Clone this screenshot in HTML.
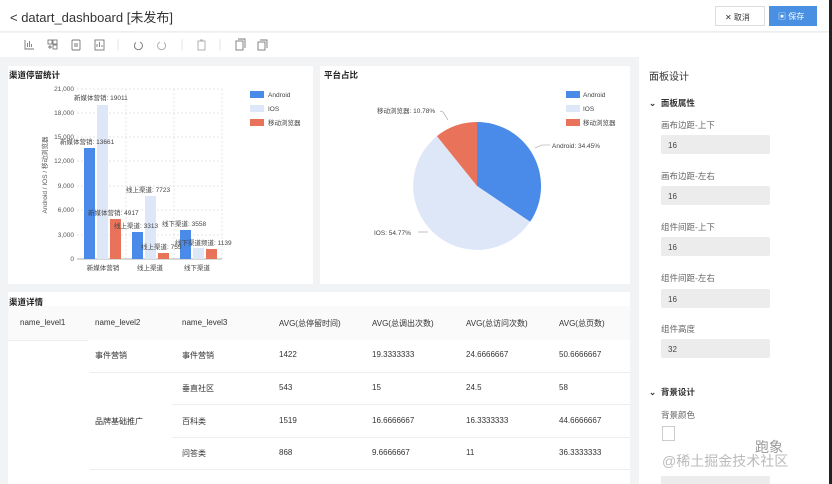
<!DOCTYPE html>
<html><head><meta charset="utf-8"><style>
*{margin:0;padding:0;box-sizing:border-box}
body{width:832px;height:484px;overflow:hidden;background:#f2f3f5;font-family:"Liberation Sans","Noto Sans CJK SC",sans-serif;color:#333;position:relative}
.a{position:absolute}
.card{position:absolute;background:#fff}
.t{font-size:8px;color:#333;position:absolute;white-space:nowrap}
.ttl{font-size:8.5px;font-weight:bold;color:#222}
.lab{font-size:8.5px;color:#666}
.inp{position:absolute;left:661px;width:109px;height:19px;background:#ececec;border-radius:2px;font-size:8px;color:#444;padding:6px 0 0 7px}
</style></head><body>
<div class="a" style="left:0;top:0;width:832px;height:32px;background:#fff;border-bottom:1px solid #eee"></div>
<div class="a" style="left:10px;top:7px;font-size:13px;color:#333">&lt; datart_dashboard [未发布]</div>
<div class="a" style="left:715px;top:6px;width:50px;height:20px;border:1px solid #ddd;background:#fff;font-size:8px;padding:5px 0 0 9px">✕ 取消</div>
<div class="a" style="left:769px;top:6px;width:48px;height:20px;background:#4a90e2;color:#fff;font-size:8px;padding:5px 0 0 9px">▣ 保存</div>
<div class="a" style="left:0;top:33px;width:832px;height:24px;background:#fff"></div>
<svg class="a" style="left:0;top:33px" width="280" height="24" fill="none" stroke="#777" stroke-width="0.9">
<path d="M25,7 V16 H34 M27.5,14 V10 M29.5,14 V8 M31.5,14 V11"/>
<rect x="48" y="7" width="4" height="4"/><rect x="53" y="7" width="4" height="4"/><rect x="53" y="12" width="4" height="4"/><path d="M48,14 H52 M50,12 V16"/>
<rect x="72" y="7" width="8" height="10" rx="1"/><path d="M74,11 H78 M74,13 H78"/>
<rect x="95" y="7" width="9" height="10"/><path d="M97,14 V11 M99.5,14 V9 M102,14 V12"/>
<path d="M118,6 V18" stroke="#e4e4e4"/>
<path d="M140,9 A4,4 0 1 1 136,9.5"/>
<path d="M160,9 A4,4 0 1 0 164,9.5" stroke="#aaa"/>
<path d="M182,6 V18" stroke="#e4e4e4"/>
<rect x="198" y="8" width="7" height="9" stroke="#aaa"/><path d="M200,7 H203" stroke="#aaa"/>
<path d="M220,6 V18" stroke="#e4e4e4"/>
<rect x="236" y="8" width="7" height="9"/><path d="M238,6 H245 V15"/>
<rect x="258" y="9" width="7" height="8"/><path d="M260,7 H267 V15"/>
</svg>

<div class="card" style="left:8px;top:66px;width:305px;height:218px"></div>
<div class="t ttl" style="left:9px;top:69px">渠道停留统计</div>
<svg class="a" style="left:0;top:0" width="320" height="290">
<g stroke="#ddd" stroke-dasharray="2,2" stroke-width="0.7">
<line x1="77" y1="89" x2="222" y2="89"/><line x1="77" y1="113" x2="222" y2="113"/><line x1="77" y1="137" x2="222" y2="137"/><line x1="77" y1="161" x2="222" y2="161"/><line x1="77" y1="186" x2="222" y2="186"/><line x1="77" y1="210" x2="222" y2="210"/><line x1="77" y1="235" x2="222" y2="235"/>
<line x1="126" y1="89" x2="126" y2="259"/><line x1="174" y1="89" x2="174" y2="259"/><line x1="222" y1="89" x2="222" y2="259"/>
</g>
<line x1="77" y1="259" x2="222" y2="259" stroke="#999" stroke-width="0.7"/>
<g font-size="6.5" fill="#555" text-anchor="end" font-family="Liberation Sans">
<text x="74" y="91">21,000</text><text x="74" y="115">18,000</text><text x="74" y="139">15,000</text><text x="74" y="163">12,000</text><text x="74" y="188">9,000</text><text x="74" y="212">6,000</text><text x="74" y="237">3,000</text><text x="74" y="261">0</text></g>
<text transform="translate(47,175) rotate(-90)" font-size="6.5" fill="#555" text-anchor="middle">Android / IOS / 移动浏览器</text>
<rect x="84" y="148" width="11" height="111" fill="#4a8ae8"/><rect x="97" y="105" width="11" height="154" fill="#dde7f8"/><rect x="110" y="219" width="11" height="40" fill="#e8735a"/>
<rect x="132" y="232" width="11" height="27" fill="#4a8ae8"/><rect x="145" y="196" width="11" height="63" fill="#dde7f8"/><rect x="158" y="253" width="11" height="6" fill="#e8735a"/>
<rect x="180" y="230" width="11" height="29" fill="#4a8ae8"/><rect x="193" y="248" width="11" height="11" fill="#dde7f8"/><rect x="206" y="249" width="11" height="10" fill="#e8735a"/>
<g font-size="6.5" fill="#444">
<text x="74" y="100">新媒体营销: 19011</text><text x="60" y="144">新媒体营销: 13661</text><text x="126" y="192">线上渠道: 7723</text><text x="88" y="215">新媒体营销: 4917</text><text x="114" y="228">线上渠道: 3313</text><text x="162" y="226">线下渠道: 3558</text><text x="141" y="249">线上渠道: 755</text><text x="175" y="245">线下渠道频道: 1139</text>
<text x="103" y="270" text-anchor="middle">新媒体营销</text><text x="150" y="270" text-anchor="middle">线上渠道</text><text x="197" y="270" text-anchor="middle">线下渠道</text>
<rect x="250" y="91" width="14" height="7" fill="#4a8ae8"/><text x="268" y="97">Android</text>
<rect x="250" y="105" width="14" height="7" fill="#dde7f8"/><text x="268" y="111">IOS</text>
<rect x="250" y="119" width="14" height="7" fill="#e8735a"/><text x="268" y="125">移动浏览器</text>
</g>
</svg>

<div class="card" style="left:320px;top:66px;width:310px;height:218px"></div>
<div class="t ttl" style="left:324px;top:69px">平台占比</div>
<svg class="a" style="left:320px;top:60px" width="320" height="230">
<g transform="translate(-320,-60)">
<path d="M477,186 L477,122 A64,64 0 0 1 530.1,221.8 Z" fill="#4a8ae8"/>
<path d="M477,186 L530.1,221.8 A64,64 0 1 1 436.9,136.1 Z" fill="#dde7f8"/>
<path d="M477,186 L436.9,136.1 A64,64 0 0 1 477,122 Z" fill="#e8735a"/>
<g stroke="#999" fill="none" stroke-width="0.6"><path d="M535,148 L542,145 L550,145"/><path d="M440,111 L443,112 L448,120"/><path d="M418,232 L428,232"/></g>
<g font-size="6.5" fill="#444">
<text x="552" y="148">Android: 34.45%</text><text x="377" y="113">移动浏览器: 10.78%</text><text x="374" y="235">IOS: 54.77%</text>
<rect x="566" y="91" width="14" height="7" fill="#4a8ae8"/><text x="583" y="97">Android</text>
<rect x="566" y="105" width="14" height="7" fill="#dde7f8"/><text x="583" y="111">IOS</text>
<rect x="566" y="119" width="14" height="7" fill="#e8735a"/><text x="583" y="125">移动浏览器</text></g>
</g></svg>

<div class="card" style="left:8px;top:292px;width:622px;height:192px"></div>
<div class="t ttl" style="left:9px;top:296px">渠道详情</div>
<div class="a" style="left:8px;top:306px;width:622px;height:34px;background:#fafafa"></div>
<div class="a" style="left:90px;top:372px;width:540px;height:1px;background:#eee"></div>
<div class="a" style="left:172px;top:404px;width:458px;height:1px;background:#eee"></div>
<div class="a" style="left:172px;top:437px;width:458px;height:1px;background:#eee"></div>
<div class="a" style="left:90px;top:469px;width:540px;height:1px;background:#eee"></div>
<div class="a" style="left:8px;top:340px;width:80px;height:1px;background:#eee"></div>
<div class="t" style="left:20px;top:318px">name_level1</div><div class="t" style="left:95px;top:318px">name_level2</div><div class="t" style="left:182px;top:318px">name_level3</div><div class="t" style="left:279px;top:318px">AVG(总停留时间)</div><div class="t" style="left:372px;top:318px">AVG(总调出次数)</div><div class="t" style="left:466px;top:318px">AVG(总访问次数)</div><div class="t" style="left:559px;top:318px">AVG(总页数)</div>
<div class="t" style="left:95px;top:350px">事件营销</div><div class="t" style="left:182px;top:350px">事件营销</div><div class="t" style="left:279px;top:350px">1422</div><div class="t" style="left:372px;top:350px">19.3333333</div><div class="t" style="left:466px;top:350px">24.6666667</div><div class="t" style="left:559px;top:350px">50.6666667</div>
<div class="t" style="left:182px;top:383px">垂直社区</div><div class="t" style="left:279px;top:383px">543</div><div class="t" style="left:372px;top:383px">15</div><div class="t" style="left:466px;top:383px">24.5</div><div class="t" style="left:559px;top:383px">58</div>
<div class="t" style="left:95px;top:416px">品牌基础推广</div><div class="t" style="left:182px;top:416px">百科类</div><div class="t" style="left:279px;top:416px">1519</div><div class="t" style="left:372px;top:416px">16.6666667</div><div class="t" style="left:466px;top:416px">16.3333333</div><div class="t" style="left:559px;top:416px">44.6666667</div>
<div class="t" style="left:182px;top:448px">问答类</div><div class="t" style="left:279px;top:448px">868</div><div class="t" style="left:372px;top:448px">9.6666667</div><div class="t" style="left:466px;top:448px">11</div><div class="t" style="left:559px;top:448px">36.3333333</div>

<div class="a" style="left:639px;top:57px;width:190px;height:427px;background:#fff"></div>
<div class="a" style="left:829px;top:0;width:3px;height:484px;background:#222"></div>
<div class="t" style="left:649px;top:68px;font-size:10px;color:#333">面板设计</div>
<div class="t" style="left:649px;top:97px;font-size:8.5px;font-weight:bold">⌄ &nbsp;面板属性</div>
<div class="t lab" style="left:661px;top:119px">画布边距-上下</div><div class="inp" style="top:135px">16</div>
<div class="t lab" style="left:661px;top:170px">画布边距-左右</div><div class="inp" style="top:186px">16</div>
<div class="t lab" style="left:661px;top:221px">组件间距-上下</div><div class="inp" style="top:237px">16</div>
<div class="t lab" style="left:661px;top:272px">组件间距-左右</div><div class="inp" style="top:289px">16</div>
<div class="t lab" style="left:661px;top:323px">组件高度</div><div class="inp" style="top:339px">32</div>
<div class="t" style="left:649px;top:386px;font-size:8.5px;font-weight:bold">⌄ &nbsp;背景设计</div>
<div class="t lab" style="left:661px;top:409px">背景颜色</div>
<div class="a" style="left:662px;top:426px;width:13px;height:15px;border:1px solid #ccc"></div>
<div class="t" style="left:755px;top:437px;font-size:14px;color:#999">跑象</div>
<div class="t" style="left:662px;top:451px;font-size:14px;color:#bbb">@稀土掘金技术社区</div>
<div class="a" style="left:661px;top:476px;width:109px;height:8px;background:#ececec"></div>
</body></html>
